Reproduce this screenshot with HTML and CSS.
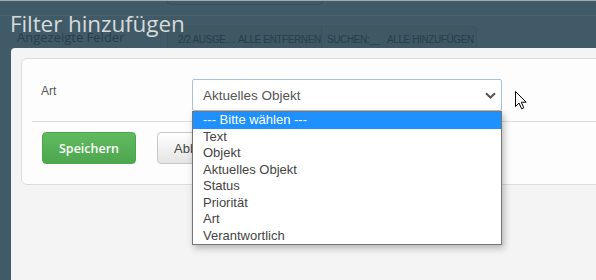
FILE: index.html
```html
<!DOCTYPE html>
<html lang="de">
<head>
<meta charset="utf-8">
<title>Filter hinzufügen</title>
<link rel="stylesheet" href="styles.css">
</head>
<body>
<div class="page">
  <div class="topline"></div>
  <div class="topbar"><div class="tab-stub"></div></div>
  <div class="fields-row">
    <span class="fields-label">Angezeigte Felder</span>
    <div class="toolbar">
      <span class="tb-item tb-a">2/2 AUSGE…</span>
      <span class="tb-item tb-b">ALLE ENTFERNEN</span>
      <span class="tb-sep"></span>
      <span class="tb-item tb-c">SUCHEN:__</span>
      <span class="tb-item tb-d">ALLE HINZUFÜGEN</span>
    </div>
  </div>
</div>

<div class="modal">
  <div class="modal-header"><h1 class="modal-title">Filter hinzufügen</h1></div>
  <div class="modal-body">
    <div class="card">
      <div class="form-row">
        <label class="form-label">Art</label>
        <div class="select-wrap">
          <div class="select">
            <span class="select-value">Aktuelles Objekt</span>
            <svg class="chevron" width="11" height="7" viewBox="0 0 11 7"><path d="M1 1.2 L5.5 5.5 L10 1.2" fill="none" stroke="#555" stroke-width="2"/></svg>
          </div>
          <ul class="dropdown">
            <li class="opt selected">--- Bitte wählen ---</li>
            <li class="opt">Text</li>
            <li class="opt">Objekt</li>
            <li class="opt">Aktuelles Objekt</li>
            <li class="opt">Status</li>
            <li class="opt">Priorität</li>
            <li class="opt">Art</li>
            <li class="opt">Verantwortlich</li>
          </ul>
        </div>
      </div>
      <div class="divider"></div>
      <div class="actions">
        <button class="btn btn-save">Speichern</button>
        <button class="btn btn-cancel">Abbrechen</button>
      </div>
    </div>
  </div>
</div>

<svg class="cursor" width="14" height="20" viewBox="0 0 14 20"><path d="M0.5 0.5 L0.5 15.5 L4 12 L6.6 17.8 L8.8 16.8 L6.3 11.2 L11.2 11.2 Z" fill="#fff" stroke="#000" stroke-width="1" stroke-linejoin="miter"/></svg>
</body>
</html>
```

FILE: styles.css
```css
* { box-sizing: border-box; }
html, body { margin: 0; padding: 0; }
body {
  width: 596px;
  height: 280px;
  overflow: hidden;
  position: relative;
  background: #405b67;
  font-family: "Liberation Sans", Arial, sans-serif;
}

/* underlying, dimmed page */
.page { width: 596px; }
.topline { height: 1px; background: #a1aaae; }
.topbar {
  height: 15px;
  border-bottom: 1px solid #4a6470;
}
.tab-stub {
  margin-left: 167px;
  width: 156px;
  height: 4px;
  border: 1px solid #36505c;
  border-top: none;
  border-radius: 0 0 4px 4px;
}
.fields-row {
  display: flex;
  align-items: flex-start;
  margin-top: 10px;
  padding-left: 17px;
}
.fields-label {
  width: 150px;
  font-size: 13px;
  line-height: 16px;
  margin-top: 3px;
  color: #27404b;
  font-family: "Open Sans", sans-serif;
}
.toolbar {
  display: flex;
  align-items: center;
  height: 22px;
  width: 310px;
  border: 1px solid #3a5460;
  border-bottom: none;
  border-radius: 0 5px 0 0;
  background: #3e5864;
}
.tb-item {
  font-size: 10px;
  color: #263f4b;
  padding-top: 3px;
  white-space: nowrap;
  letter-spacing: -0.4px;
}
.tb-a { margin-left: 10px; width: 60px; overflow: hidden; }
.tb-b { width: 83px; }
.tb-sep {
  width: 1px;
  height: 22px;
  background: #38515d;
}
.tb-c { margin-left: 5px; width: 60px; }
.tb-d { flex: none; }

/* modal overlay */
.modal {
  position: absolute;
  left: 0;
  top: 0;
  width: 596px;
  height: 280px;
  display: flex;
  flex-direction: column;
}
.modal-header {
  height: 48px;
  padding: 10px 0 0 10px;
}
.modal-title {
  margin: 0;
  font-family: "Open Sans", sans-serif;
  font-weight: 400;
  font-size: 22.5px;
  line-height: 28px;
  color: #d6dadb;
  letter-spacing: -0.1px;
}
.modal-body {
  flex: 1;
  margin-left: 11px;
  background: #f4f4f4;
  border-top-left-radius: 4px;
  padding: 10px 0 0 10px;
  overflow: hidden;
}
.card {
  width: 640px;
  background: #fdfdfd;
  border: 1px solid #dcdcdc;
  border-radius: 6px;
  padding: 20px 0 20px 0;
}
.form-row {
  display: flex;
  align-items: flex-start;
  padding-left: 19px;
}
.form-label {
  width: 151px;
  font-size: 12px;
  line-height: 17px;
  padding-top: 4px;
  color: #555;
}
.select-wrap { position: relative; }
.select {
  width: 310px;
  height: 32px;
  border: 1px solid #a6c3dc;
  border-radius: 2px;
  background: #fff;
  display: flex;
  align-items: center;
  justify-content: space-between;
  padding: 0 5px 0 10px;
}
.select-value {
  font-size: 13.5px;
  color: #555;
  padding-top: 1px;
}
.chevron { margin-top: 1px; }
.dropdown {
  position: absolute;
  left: 0;
  top: 32px;
  width: 310px;
  margin: 0;
  padding: 0;
  list-style: none;
  background: #fff;
  border: 1px solid #767676;
  box-shadow: 2px 3px 7px rgba(0,0,0,0.28);
  z-index: 5;
}
.opt {
  height: 16.5px;
  line-height: 16.5px;
  font-size: 13px;
  color: #444;
  padding-left: 10px;
  white-space: nowrap;
}
.opt.selected { background: #1e90ff; color: #fff; }

.divider {
  margin: 10px 0 10px 10px;
  border-top: 1px solid #dcdcdc;
}
.actions {
  display: flex;
  padding-left: 20px;
  gap: 21px;
}
.btn {
  height: 32px;
  border-radius: 4px;
  font-family: "Liberation Sans", Arial, sans-serif;
  font-size: 13px;
  padding: 0;
}
.btn-save {
  width: 94px;
  border: 1px solid #4aa64a;
  background: linear-gradient(#60bb60, #4ea64e);
  color: #fff;
  font-family: "Open Sans", sans-serif;
  font-weight: 600;
  font-size: 12.5px;
}
.btn-cancel {
  width: 92px;
  border: 1px solid #c8c8c8;
  background: linear-gradient(#ffffff, #e4e4e4);
  color: #444;
  text-align: left;
  padding-left: 16px;
}

.cursor {
  position: absolute;
  left: 515px;
  top: 91px;
  z-index: 10;
}
```
